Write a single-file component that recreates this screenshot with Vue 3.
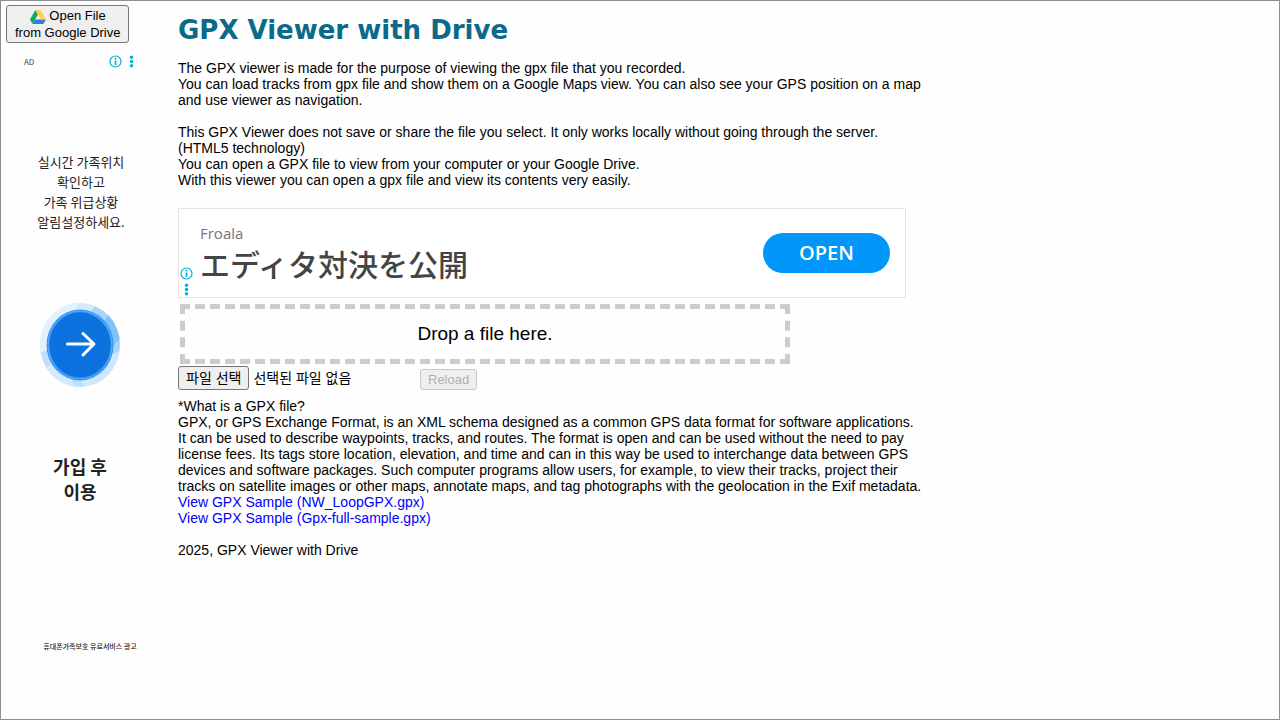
<script setup>
import { ref } from 'vue'

const fileLabel = ref('선택된 파일 없음')

function onPick(event) {
  const file = event.target.files[0]
  fileLabel.value = file ? file.name : '선택된 파일 없음'
}
</script>

<template>
  <div class="page">
    <aside class="side">
      <button type="button" class="native drive">
        <svg class="drive-icon" viewBox="0 0 87 78" aria-hidden="true">
          <path d="M59.8 53H27.5L13.75 76.8c1.35.8 2.9 1.2 4.5 1.2h50.8c1.6 0 3.15-.45 4.5-1.2L86.1 57.5c.8-1.4 1.2-2.95 1.2-4.5z" fill="#3777e3" />
          <path d="M30 1.2L43.65 25 13.75 76.8c-1.35-.8-2.5-1.9-3.3-3.3L1.2 57.5a9 9 0 0 1 0-9L26.6 4.5c.8-1.4 1.95-2.5 3.4-3.3z" fill="#11a861" />
          <path d="M57.4 1.2C56.05.4 54.5 0 52.9 0H34.4c-1.6 0-3.15.45-4.5 1.2L59.8 53h27.45c0-1.55-.4-3.1-1.2-4.5L60.7 4.5c-.8-1.4-1.95-2.5-3.3-3.3z" fill="#ffcf48" />
        </svg>
        Open File<br />from Google Drive
      </button>

      <section class="side-ad">
        <header class="ad-head">
          <span class="ad-mark">AD</span>
          <svg class="info" viewBox="0 0 13 13" aria-hidden="true">
            <circle cx="6.5" cy="6.5" r="5.5" fill="none" stroke="#00aecd" stroke-width="1.2" />
            <rect x="5.7" y="2.8" width="1.6" height="1.7" fill="#00aecd" />
            <rect x="5.7" y="5.4" width="1.6" height="4.6" fill="#00aecd" />
          </svg>
          <svg class="dots" viewBox="0 0 5 13" aria-hidden="true">
            <circle cx="2.5" cy="2.3" r="1.7" fill="#00aecd" />
            <circle cx="2.5" cy="6.5" r="1.7" fill="#00aecd" />
            <circle cx="2.5" cy="10.7" r="1.7" fill="#00aecd" />
          </svg>
        </header>
        <p class="ad-copy">실시간 가족위치<br />확인하고<br />가족 위급상황<br />알림설정하세요.</p>
        <svg class="arrow" viewBox="0 0 80 84" aria-hidden="true">
          <defs>
            <clipPath id="halo"><ellipse cx="40" cy="42" rx="40" ry="42" /></clipPath>
          </defs>
          <g clip-path="url(#halo)">
            <rect width="80" height="84" fill="#d2e8fd" />
            <path d="M0 0H40L0 56z" fill="#e2f1fe" />
            <path d="M0 50L14 44 46 84H0z" fill="#bfe0fc" />
            <path d="M0 66L18 58 36 84H0z" fill="#d3eafd" />
            <path d="M48 12L58 0H80V48L66 54z" fill="#a9d5fb" />
            <path d="M62 20L72 8 80 14V36L70 46z" fill="#80c1f8" />
            <path d="M70 58L80 48V84H50z" fill="#cce6fd" />
          </g>
          <ellipse cx="40" cy="42" rx="33.5" ry="35.5" fill="#3290f0" />
          <ellipse cx="40" cy="42" rx="32" ry="34" fill="none" stroke="#66b2f8" stroke-width="0.9" />
          <ellipse cx="40" cy="42" rx="30.5" ry="32.5" fill="#0b72df" />
          <path d="M27.5 41H53M43 30.5L54 41 43 52" fill="none" stroke="#fff" stroke-width="3" stroke-linecap="round" stroke-linejoin="round" />
        </svg>
        <p class="ad-join">가입 후<br />이용</p>
        <p class="ad-note">휴대폰가족보호 유료서비스 광고</p>
      </section>
    </aside>

    <main class="main">
      <h1>GPX Viewer with Drive</h1>
      <p>
        The GPX viewer is made for the purpose of viewing the gpx file that you recorded.<br />
        You can load tracks from gpx file and show them on a Google Maps view. You can also see your GPS position on a map
        and use viewer as navigation.
      </p>
      <p>
        This GPX Viewer does not save or share the file you select. It only works locally without going through the server.<br />
        (HTML5 technology)<br />
        You can open a GPX file to view from your computer or your Google Drive.<br />
        With this viewer you can open a gpx file and view its contents very easily.
      </p>

      <section class="banner">
        <div class="banner-icons">
          <svg class="info" viewBox="0 0 13 13" aria-hidden="true">
            <circle cx="6.5" cy="6.5" r="5.5" fill="none" stroke="#00aecd" stroke-width="1.2" />
            <rect x="5.7" y="2.8" width="1.6" height="1.7" fill="#00aecd" />
            <rect x="5.7" y="5.4" width="1.6" height="4.6" fill="#00aecd" />
          </svg>
          <svg class="dots" viewBox="0 0 5 13" aria-hidden="true">
            <circle cx="2.5" cy="2.3" r="1.7" fill="#00aecd" />
            <circle cx="2.5" cy="6.5" r="1.7" fill="#00aecd" />
            <circle cx="2.5" cy="10.7" r="1.7" fill="#00aecd" />
          </svg>
        </div>
        <div class="banner-copy">
          <span class="brand">Froala</span>
          <span class="headline" lang="ja">エディタ対決を公開</span>
        </div>
        <a class="open" href="#">OPEN</a>
      </section>

      <div class="drop">Drop a file here.</div>

      <div class="controls">
        <div class="picker">
          <input id="gpx-file" class="file-input" type="file" accept=".gpx" @change="onPick" />
          <label class="native choose" for="gpx-file">파일 선택</label>
          <span class="file-name">{{ fileLabel }}</span>
        </div>
        <button type="button" class="native reload" disabled>Reload</button>
      </div>

      <p>
        *What is a GPX file?<br />
        GPX, or GPS Exchange Format, is an XML schema designed as a common GPS data format for software applications.
        It can be used to describe waypoints, tracks, and routes. The format is open and can be used without the need to pay
        license fees. Its tags store location, elevation, and time and can in this way be used to interchange data between GPS
        devices and software packages. Such computer programs allow users, for example, to view their tracks, project their
        tracks on satellite images or other maps, annotate maps, and tag photographs with the geolocation in the Exif metadata.<br />
        <a href="#">View GPX Sample (NW_LoopGPX.gpx)</a><br />
        <a href="#">View GPX Sample (Gpx-full-sample.gpx)</a>
      </p>
      <p>2025, GPX Viewer with Drive</p>
    </main>
  </div>
</template>

<style>
body {
  margin: 0;
  background: #fefefe;
}
</style>

<style scoped>
.page {
  box-sizing: border-box;
  min-height: 100vh;
  display: flex;
  gap: 12px;
  padding: 4px 5px;
  border: 1px solid #909090;
  font: 14px/16px "Liberation Sans", "Noto Sans CJK KR", Arial, sans-serif;
  color: #000;
}
.side {
  flex: 0 0 160px;
}
.native {
  border: 1px solid #767676;
  border-radius: 3px;
  background: #efefef;
  color: #000;
  font-family: "Liberation Sans", "Noto Sans CJK KR", Arial, sans-serif;
}
.drive {
  display: block;
  padding: 1px 8px;
  font-size: 13px;
  line-height: 17px;
  white-space: nowrap;
}
.drive-icon {
  width: 16px;
  height: 14px;
  vertical-align: -4px;
}
.side-ad {
  display: flex;
  flex-direction: column;
  align-items: center;
  width: 148px;
  margin-top: 12px;
  font-family: "Noto Sans CJK KR", sans-serif;
  color: #222;
}
.ad-head {
  align-self: stretch;
  display: flex;
  align-items: center;
  gap: 7px;
  padding: 0 20px 0 18px;
}
.ad-mark {
  flex: 1;
  font: 8px/13px "Noto Sans CJK KR", sans-serif;
  color: #444;
}
.info {
  display: block;
  width: 13px;
  height: 13px;
}
.dots {
  display: block;
  width: 5px;
  height: 13px;
}
.side-ad p {
  margin: 0;
  text-align: center;
}
.side-ad .ad-copy {
  margin-top: 84px;
  padding-left: 2px;
  font-size: 13px;
  line-height: 20px;
}
.arrow {
  width: 80px;
  height: 84px;
  margin-top: 71px;
}
.side-ad .ad-join {
  margin-top: 67px;
  font-size: 18px;
  line-height: 25px;
  font-weight: 700;
}
.side-ad .ad-note {
  margin-top: 136px;
  padding-left: 20px;
  font-size: 7px;
  line-height: 12px;
  font-weight: 500;
  white-space: nowrap;
}
.main {
  flex: 0 1 745px;
  min-width: 0;
}
h1 {
  margin: 9px 0 14px;
  font: 700 26px/32px "DejaVu Sans", Verdana, sans-serif;
  color: #0b6a8a;
}
.main p {
  margin: 0 0 16px;
}
.main p a {
  color: #0000ff;
  text-decoration: none;
}
.banner {
  box-sizing: border-box;
  display: flex;
  align-items: center;
  max-width: 728px;
  height: 90px;
  margin-top: 20px;
  padding: 0 15px 0 1px;
  border: 1px solid #e4e4e4;
  background: #fff;
}
.banner-icons {
  align-self: flex-end;
  display: flex;
  flex-direction: column;
  align-items: center;
  gap: 3px;
  padding-bottom: 1px;
}
.banner-copy {
  flex: 1;
  display: flex;
  flex-direction: column;
  padding-left: 7px;
}
.brand {
  font: 15px/20px "Open Sans", sans-serif;
  color: #777;
}
.headline {
  font: 500 30px/40px "Noto Sans CJK JP", sans-serif;
  color: #444;
}
.open {
  width: 127px;
  border-radius: 20px;
  background: #0096fa;
  color: #fff;
  font: 600 20px/40px "Open Sans", sans-serif;
  text-align: center;
  text-decoration: none;
}
.drop {
  box-sizing: border-box;
  max-width: 610px;
  margin: 6px 2px 2px;
  border: 5px dashed #ccc;
  font-size: 19px;
  line-height: 50px;
  text-align: center;
}
.controls {
  display: flex;
  align-items: flex-end;
  margin-bottom: 8px;
}
.picker {
  display: flex;
  align-items: center;
  gap: 4px;
  width: 242px;
}
.file-input {
  position: absolute;
  width: 1px;
  height: 1px;
  opacity: 0;
}
.choose {
  padding: 1px 7px;
  font-size: 14px;
  line-height: 20px;
}
.file-name {
  font-size: 14px;
  line-height: 20px;
}
.reload {
  padding: 1px 7px;
  border-color: #c8c8c8;
  color: #b0b0b0;
  font-size: 13px;
  line-height: 17px;
}
</style>
